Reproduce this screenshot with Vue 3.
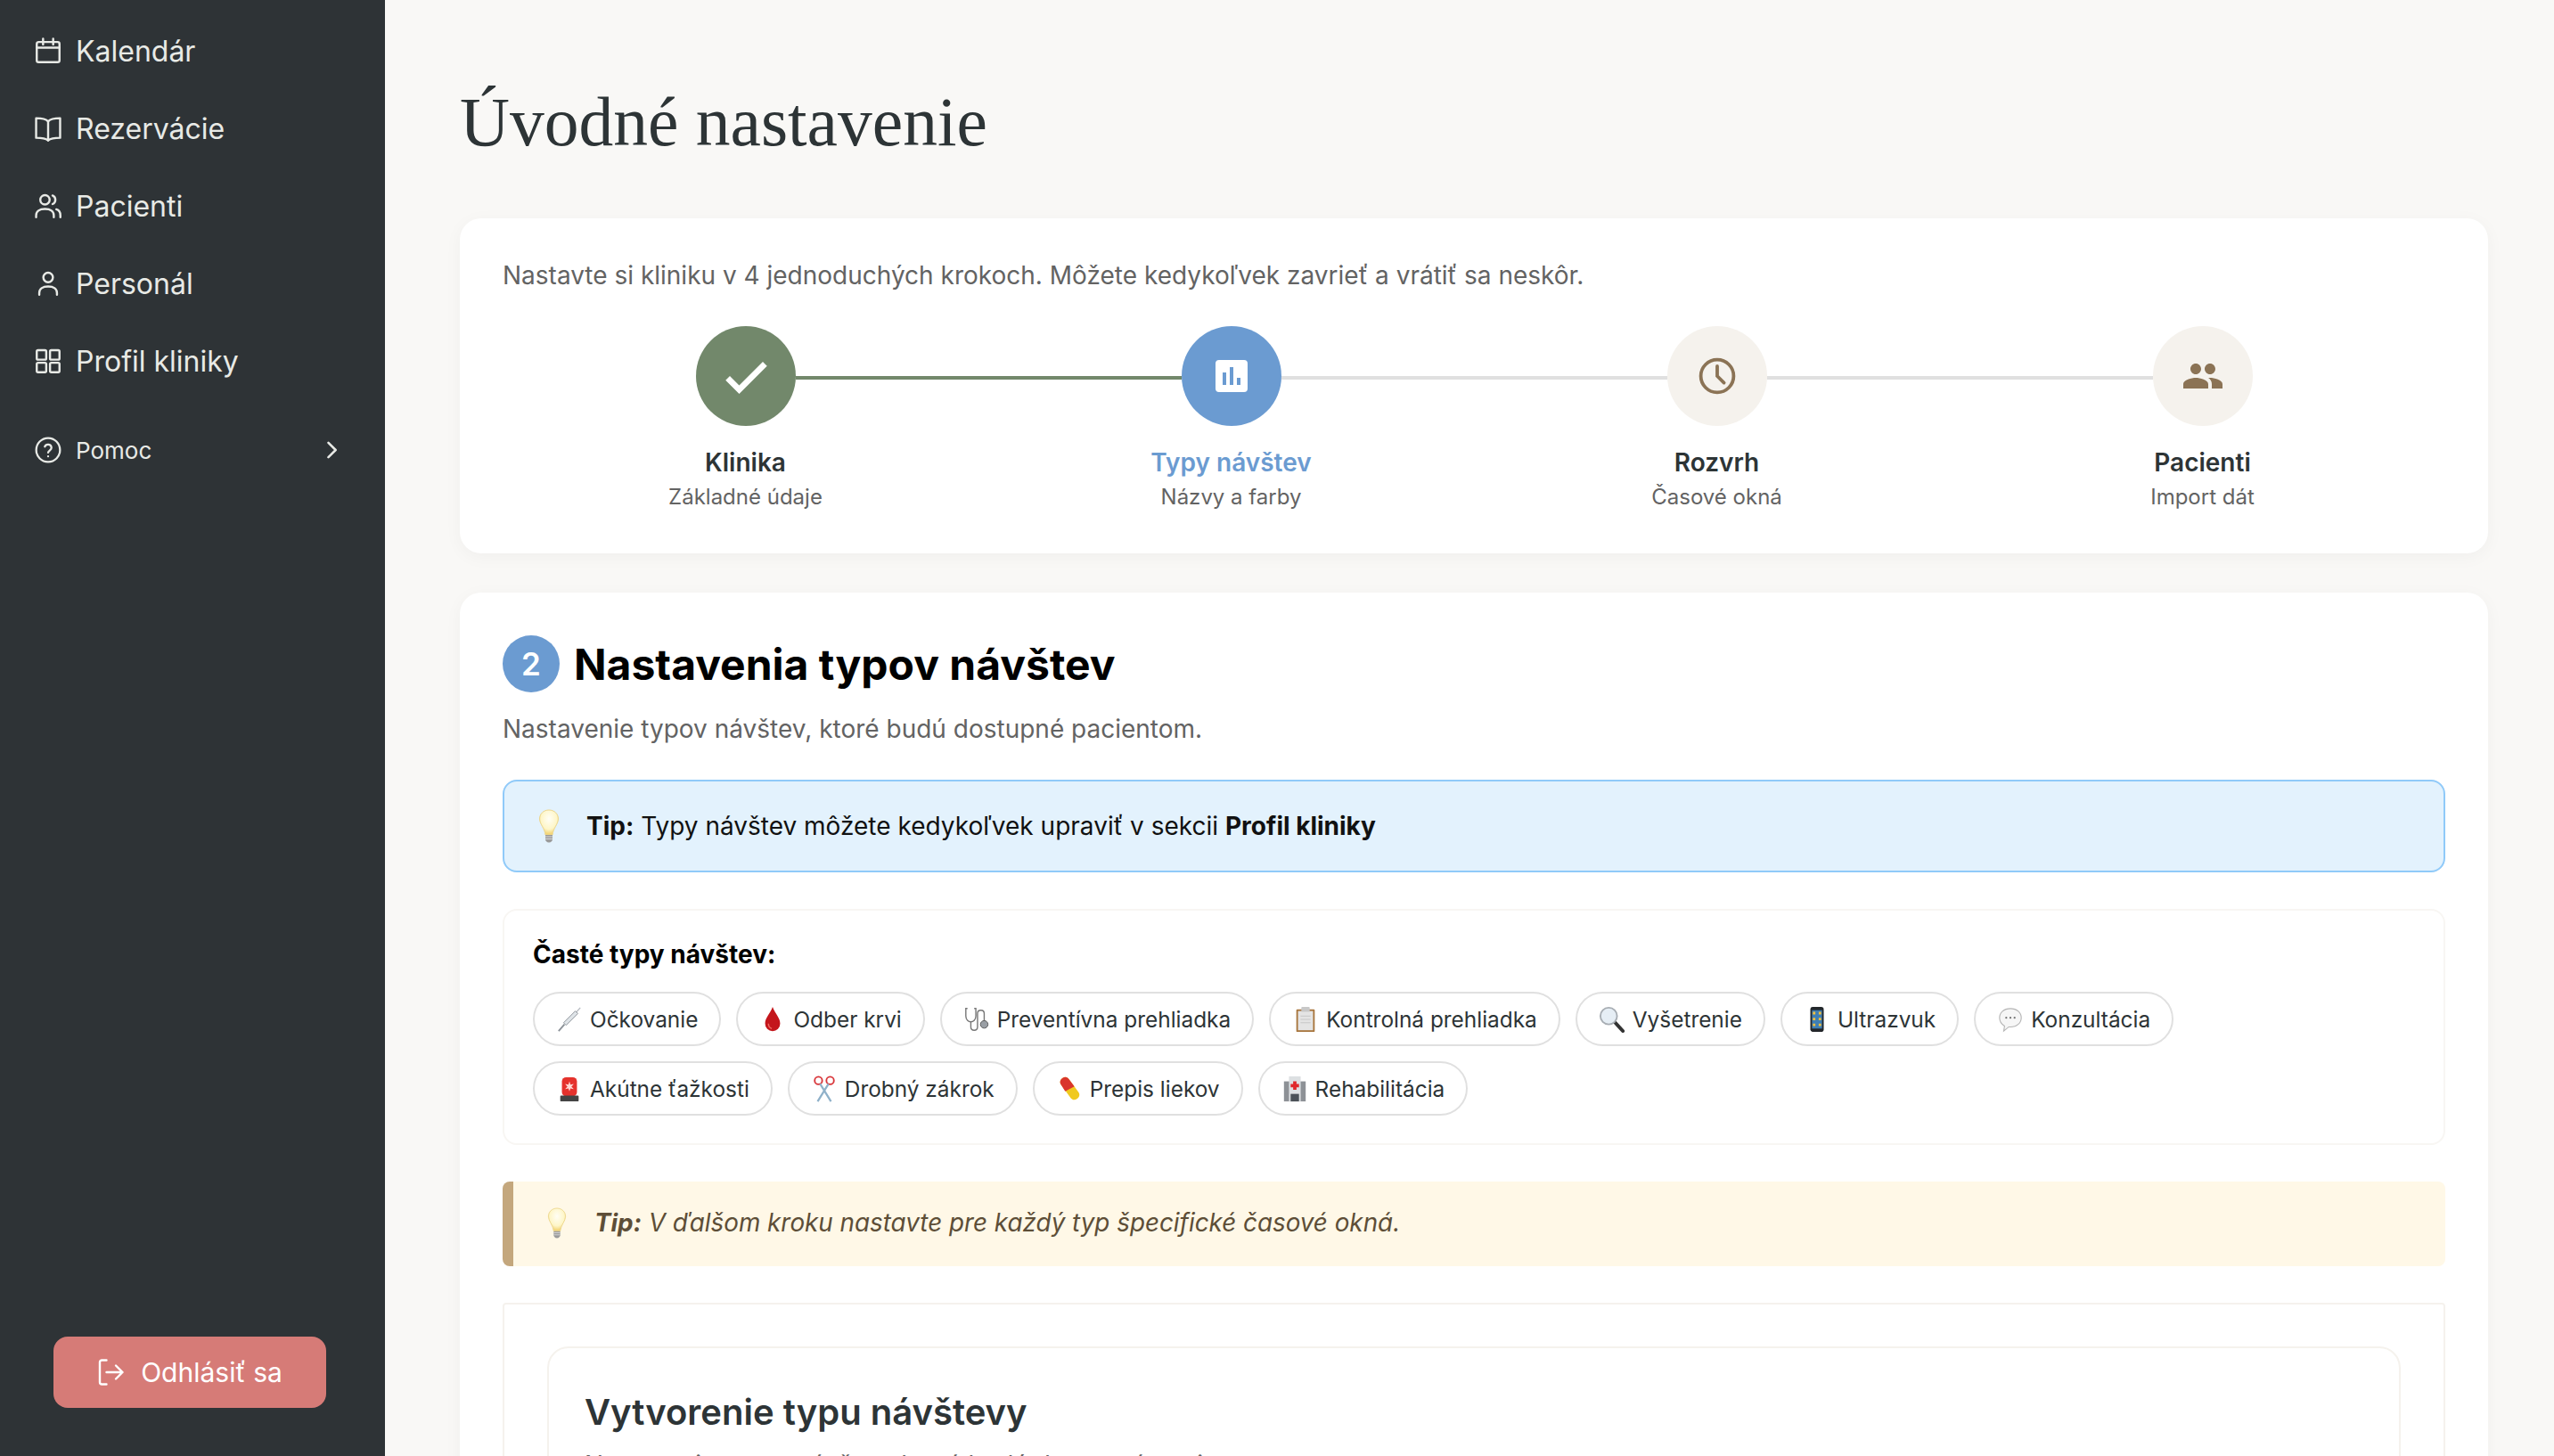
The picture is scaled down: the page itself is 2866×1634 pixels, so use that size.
<template>
  <div class="app">
    <aside class="sidebar">
      <nav class="nav">
        <a v-for="item in navItems" :key="item.label" class="nav-item">
          <svg class="nav-icon" viewBox="0 0 24 24" fill="none" stroke="currentColor" stroke-width="1.7" stroke-linecap="round" stroke-linejoin="round">
            <path v-for="d in item.paths" :key="d" :d="d" />
          </svg>
          <span>{{ item.label }}</span>
        </a>
      </nav>
      <div class="help">
        <svg class="help-icon" viewBox="0 0 24 24" fill="none" stroke="currentColor" stroke-width="1.7" stroke-linecap="round" stroke-linejoin="round">
          <circle cx="12" cy="12" r="10" />
          <path d="M9.2 9.2a2.9 2.9 0 0 1 5.6 1c0 1.9-2.8 2.4-2.8 4" />
          <path d="M12 17.4h.01" />
        </svg>
        <span class="help-label">Pomoc</span>
        <svg class="chevron" viewBox="0 0 24 24" fill="none" stroke="currentColor" stroke-width="2.2" stroke-linecap="round" stroke-linejoin="round">
          <path d="M9 5l7 7-7 7" />
        </svg>
      </div>
      <button class="logout">
        <svg class="logout-icon" viewBox="0 0 24 24" fill="none" stroke="currentColor" stroke-width="1.6" stroke-linecap="round" stroke-linejoin="round">
          <path d="M9 3H5.500a1.500 1.500 0 0 0-1.500 1.500v15A1.500 1.500 0 0 0 5.500 21H9" />
          <path d="M9 12h12M16 7l5 5-5 5" />
        </svg>
        <span>Odhlásiť sa</span>
      </button>
    </aside>

    <main class="main">
      <h1 class="title">Úvodné nastavenie</h1>

      <section class="card intro">
        <p class="lead">Nastavte si kliniku v 4 jednoduchých krokoch. Môžete kedykoľvek zavrieť a vrátiť sa neskôr.</p>
        <div class="steps">
          <div v-for="step in steps" :key="step.name" class="step" :class="step.state">
            <div class="step-dot">
              <svg v-if="step.name === 'Klinika'" class="step-icon-lg" viewBox="0 0 24 24" fill="#fff"><path d="M9 16.2 4.800 12l-1.900 1.900L9 20 21.500 7.500 19.600 5.600z" /></svg>
              <svg v-else-if="step.name === 'Typy návštev'" class="step-icon" viewBox="0 0 24 24"><path fill="#fff" d="M19 3H5a2 2 0 0 0-2 2v14a2 2 0 0 0 2 2h14a2 2 0 0 0 2-2V5a2 2 0 0 0-2-2zM9 17H7v-7h2zm4 0h-2V7h2zm4 0h-2v-4h2z" /></svg>
              <svg v-else-if="step.name === 'Rozvrh'" class="step-icon" viewBox="0 0 24 24" fill="none" stroke="#8b7355" stroke-width="1.9" stroke-linecap="round"><circle cx="12" cy="12" r="9.200" /><path d="M12 6.500V12l3.800 3.800" /></svg>
              <svg v-else class="step-icon" viewBox="0 0 24 24" fill="#8b7355"><path d="M16 11c1.660 0 2.990-1.340 2.990-3S17.660 5 16 5c-1.660 0-3 1.340-3 3s1.340 3 3 3zm-8 0c1.660 0 2.990-1.340 2.990-3S9.660 5 8 5C6.340 5 5 6.340 5 8s1.340 3 3 3zm0 2c-2.330 0-7 1.170-7 3.500V19h14v-2.500c0-2.330-4.670-3.500-7-3.500zm8 0c-.29 0-.62.02-.97.05 1.160.84 1.970 1.970 1.970 3.450V19h6v-2.500c0-2.330-4.670-3.500-7-3.500z" /></svg>
            </div>
            <div class="step-name">{{ step.name }}</div>
            <div class="step-sub">{{ step.sub }}</div>
          </div>
        </div>
      </section>

      <section class="card types">
        <div class="heading">
          <span class="badge">2</span>
          <h2>Nastavenia typov návštev</h2>
        </div>
        <p class="lead desc">Nastavenie typov návštev, ktoré budú dostupné pacientom.</p>

        <div class="tip-blue">
          <svg class="bulb" viewBox="0 0 24 38"><use href="#bulb-shape" /></svg>
          <span><b>Tip:</b> Typy návštev môžete kedykoľvek upraviť v sekcii <b>Profil kliniky</b></span>
        </div>

        <div class="common">
          <div class="common-title">Časté typy návštev:</div>
          <div class="chips">
            <button v-for="chip in chips" :key="chip.label" class="chip">
              <svg class="chip-icon" viewBox="0 0 32 32" v-html="chip.icon"></svg>
              <span>{{ chip.label }}</span>
            </button>
          </div>
        </div>

        <div class="tip-yellow">
          <svg class="bulb small" viewBox="0 0 24 38"><use href="#bulb-shape" /></svg>
          <span><b>Tip:</b> V ďalšom kroku nastavte pre každý typ špecifické časové okná.</span>
        </div>

        <div class="outer">
          <div class="inner">
            <h3>Vytvorenie typu návštevy</h3>
            <p class="lead inner-sub">Nastavenie typov návštev, ktoré budú dostupné pacientom.</p>
          </div>
        </div>
      </section>

      <svg width="0" height="0" class="defs">
        <defs>
          <radialGradient id="bulb-glow" cx="50%" cy="35%" r="60%">
            <stop offset="0" stop-color="#fffef5" />
            <stop offset="0.7" stop-color="#fef6c8" />
            <stop offset="1" stop-color="#f3d67a" />
          </radialGradient>
          <g id="bulb-shape">
            <path d="M12 1C5.800 1 1.500 5.600 1.500 11c0 5.600 5.800 10.600 6.500 18h8c.7-7.400 6.500-12.400 6.500-18C22.500 5.600 18.200 1 12 1z" fill="url(#bulb-glow)" stroke="#ecd68d" stroke-width="1" />
            <path d="M8 29h8v5c0 1.500-1.500 3.500-4 3.500S8 35.500 8 34z" fill="#9a9a9a" />
            <path d="M8 31h8M8 33.500h8" stroke="#d8d8d8" stroke-width="1" />
          </g>
        </defs>
      </svg>
    </main>
  </div>
</template>

<script setup>
const navItems = [
  { label: 'Kalendár', paths: ['M4.500 5h15a1.500 1.500 0 0 1 1.500 1.500v13a1.500 1.500 0 0 1-1.500 1.500h-15A1.500 1.500 0 0 1 3 19.500v-13A1.500 1.500 0 0 1 4.500 5z', 'M8 2.500V7M16 2.500V7M3 9.500h18'] },
  { label: 'Rezervácie', paths: ['M12 6.500C10.500 4.800 8 4 2.500 4v15.500c5.500 0 8 .8 9.500 2 1.500-1.200 4-2 9.500-2V4C16 4 13.500 4.800 12 6.500z', 'M12 6.500v15'] },
  { label: 'Pacienti', paths: ['M9.500 3.500a3.700 3.700 0 1 1 0 7.400 3.700 3.700 0 0 1 0-7.400z', 'M2.500 21v-1.500c0-3 2.500-5 7-5s7 2 7 5V21', 'M15.500 3.800a3.700 3.700 0 0 1 0 6.800', 'M18.500 14.800c2 .6 3.200 2.300 3.200 4.700V21'] },
  { label: 'Personál', paths: ['M12 3.500a3.800 3.800 0 1 1 0 7.600 3.800 3.800 0 0 1 0-7.600z', 'M5 21v-1.500c0-3 2.500-5 7-5s7 2 7 5V21'] },
  { label: 'Profil kliniky', paths: ['M4 3.500h5.500a1 1 0 0 1 1 1V10a1 1 0 0 1-1 1H4a1 1 0 0 1-1-1V4.500a1 1 0 0 1 1-1z', 'M14.500 3.500H20a1 1 0 0 1 1 1V10a1 1 0 0 1-1 1h-5.500a1 1 0 0 1-1-1V4.500a1 1 0 0 1 1-1z', 'M4 13.500h5.500a1 1 0 0 1 1 1V20a1 1 0 0 1-1 1H4a1 1 0 0 1-1-1v-5.500a1 1 0 0 1 1-1z', 'M14.500 13.500H20a1 1 0 0 1 1 1V20a1 1 0 0 1-1 1h-5.500a1 1 0 0 1-1-1v-5.500a1 1 0 0 1 1-1z'] }
]

const steps = [
  { name: 'Klinika', sub: 'Základné údaje', state: 'done' },
  { name: 'Typy návštev', sub: 'Názvy a farby', state: 'active' },
  { name: 'Rozvrh', sub: 'Časové okná', state: 'todo' },
  { name: 'Pacienti', sub: 'Import dát', state: 'todo last' }
]

// male ikonky namiesto emoji, font s farebnymi emoji tu nie je
const chips = [
  { label: 'Očkovanie', icon: '<path d="M29 2 21 11" stroke="#b8bcc2" stroke-width="1.500"/><path d="M23 6 9 20l3 3 14-14z" fill="#dfe4e8" stroke="#8b9198" stroke-width="1"/><path d="M10 22 3 30" stroke="#8b9198" stroke-width="2"/>' },
  { label: 'Odber krvi', icon: '<path d="M16 1C13 9 7 14 7 21a9 9 0 0 0 18 0c0-7-6-12-9-20z" fill="#c4161c"/><path d="M11 21c0 3 1 5 4 6" stroke="#ef6a62" stroke-width="1.500" fill="none"/>' },
  { label: 'Preventívna prehliadka', icon: '<path d="M5 3H3v9c0 4 3 7 6 7s6-3 6-7V3h-2" fill="none" stroke="#777" stroke-width="1.500"/><path d="M9 19v6c0 3 2 4 4 4s4-1 4-4V9c0-3 2-4 4-4s4 1 4 4v9" fill="none" stroke="#777" stroke-width="1.500"/><circle cx="25" cy="22" r="4.500" fill="#9a9fa5" stroke="#555"/>' },
  { label: 'Kontrolná prehliadka', icon: '<rect x="5" y="4" width="22" height="27" rx="1" fill="#a8763e"/><rect x="7" y="6" width="18" height="23" fill="#e4e4e4"/><path d="M10 12h12M10 16h12M10 20h12" stroke="#c4c4c4" stroke-width="1"/><rect x="11" y="1" width="10" height="6" rx="1" fill="#c8c8c8"/>' },
  { label: 'Vyšetrenie', icon: '<path d="M18 18 29 30" stroke="#333" stroke-width="4" stroke-linecap="round"/><circle cx="12" cy="12" r="10" fill="#e6eef5" stroke="#a7adb3" stroke-width="2"/>' },
  { label: 'Ultrazvuk', icon: '<rect x="8" y="1" width="16" height="30" rx="3" fill="#23272b"/><rect x="10" y="5" width="12" height="22" fill="#3f7fb5"/><path d="M11 7h3v3h-3zM18 7h3v3h-3zM11 14h3v3h-3zM18 14h3v3h-3zM11 21h3v3h-3zM18 21h3v3h-3z" fill="#f0c040"/>' },
  { label: 'Konzultácia', icon: '<path d="M16 3C8 3 3 8 3 14c0 5 3 8 6 10l-1 6 6-5h2c8 0 13-5 13-11S24 3 16 3z" fill="#f6f6f6" stroke="#b5b5b5" stroke-width="1.200"/><circle cx="11" cy="14" r="1.200" fill="#777"/><circle cx="16" cy="14" r="1.200" fill="#777"/><circle cx="21" cy="14" r="1.200" fill="#777"/>' },
  { label: 'Akútne ťažkosti', icon: '<rect x="7" y="2" width="18" height="23" rx="5" fill="#e5322d"/><path d="M16 7l1.200 4 4-.8-2.800 3 2.800 3-4-.8L16 19l-1.200-3.600-4 .8 2.800-3-2.800-3 4 .8z" fill="#ffd9d5"/><rect x="5" y="24" width="22" height="7" rx="1" fill="#444"/>' },
  { label: 'Drobný zákrok', icon: '<circle cx="9" cy="6" r="4.500" fill="none" stroke="#d9363a" stroke-width="2"/><circle cx="23" cy="6" r="4.500" fill="none" stroke="#d9363a" stroke-width="2"/><path d="M11 10 24 31M21 10 8 31" stroke="#8fb1c9" stroke-width="2.400"/>' },
  { label: 'Prepis liekov', icon: '<path d="M8 3c3-2 6-1 8 2l11 15c2 3 1 6-2 8s-6 1-8-2L6 11C4 8 5 5 8 3z" fill="#f0c91f"/><path d="M8 3c3-2 6-1 8 2l6 8-11 6-5-8C4 8 5 5 8 3z" fill="#d9352c"/>' },
  { label: 'Rehabilitácia', icon: '<rect x="3" y="7" width="26" height="24" fill="#8d9196"/><rect x="9" y="1" width="14" height="30" fill="#dde0e2"/><path d="M14 7h4v3h3v4h-3v3h-4v-3h-3v-4h3z" fill="#e0282b"/><rect x="11" y="22" width="10" height="9" fill="#4b5158"/>' }
]
</script>

<style scoped>
.app {
  display: flex;
  height: 1634px;
  overflow: hidden;
  background: #f9f8f6;
  font-family: Inter, "Noto Sans", sans-serif;
  color: #2d3436;
}

.sidebar {
  width: 432px;
  flex-shrink: 0;
  background: #2e3336;
  display: flex;
  flex-direction: column;
  padding: 17px 0 54px;
  box-sizing: border-box;
  color: #e8eae6;
}

.nav {
  display: flex;
  flex-direction: column;
  gap: 7px;
}

.nav-item {
  display: flex;
  align-items: center;
  gap: 14px;
  height: 80px;
  padding-left: 37px;
  font-size: 32px;
}

.nav-icon {
  width: 34px;
  height: 34px;
  flex-shrink: 0;
}

.help {
  display: flex;
  align-items: center;
  gap: 15px;
  height: 64px;
  margin-top: 28px;
  padding: 0 46px 0 38px;
  font-size: 26px;
}

.help-icon {
  width: 32px;
  height: 32px;
  flex-shrink: 0;
}

.help-label {
  flex: 1;
}

.chevron {
  width: 28px;
  height: 28px;
}

.logout {
  margin: auto 66px 0 60px;
  height: 80px;
  display: flex;
  align-items: center;
  justify-content: center;
  gap: 16px;
  padding: 0 3px 0 0;
  border: 0;
  border-radius: 16px;
  background: #d67b77;
  color: #fff;
  font: inherit;
  font-size: 30px;
}

.logout-icon {
  width: 36px;
  height: 36px;
}

.main {
  flex: 1;
  min-width: 0;
  padding: 0 74px 0 84px;
}

.title {
  margin: 0;
  padding: 93px 0 63px;
  font-family: "Liberation Serif", serif;
  font-weight: 400;
  font-size: 77.5px;
  line-height: 89px;
  color: #2d3436;
}

.card {
  background: #fff;
  border-radius: 24px;
  box-shadow: 0 4px 20px rgba(0, 0, 0, 0.04);
  padding: 48px;
}

.intro {
  height: 376px;
  box-sizing: border-box;
  padding-top: 46px;
  margin-bottom: 44px;
}

.lead {
  margin: 0;
  font-size: 28px;
  line-height: 36px;
  color: #636363;
}

.steps {
  display: flex;
  margin-top: 39px;
}

.step {
  flex: 1;
  position: relative;
  display: flex;
  flex-direction: column;
  align-items: center;
}

/* spojovacia ciara medzi krokmi */
.step::after {
  content: "";
  position: absolute;
  top: 56px;
  left: calc(50% + 56px);
  width: calc(100% - 112px);
  height: 4px;
  background: #e0e0e0;
}

.step.done::after {
  background: #72886b;
}

.step.last::after {
  display: none;
}

.step-dot {
  width: 112px;
  height: 112px;
  border-radius: 50%;
  display: flex;
  align-items: center;
  justify-content: center;
  background: #f5f2ed;
}

.done .step-dot {
  background: #72886b;
}

.active .step-dot {
  background: #6b9bd1;
}

.step-icon {
  width: 48px;
  height: 48px;
}

.step-icon-lg {
  width: 60px;
  height: 60px;
}

.step-name {
  margin-top: 23px;
  font-size: 28px;
  line-height: 36px;
  font-weight: 600;
  color: #2d3436;
}

.active .step-name {
  color: #6b9bd1;
}

.step-sub {
  margin-top: 5px;
  font-size: 24px;
  line-height: 32px;
  color: #636363;
}

.types {
  min-height: 1200px;
}

.heading {
  display: flex;
  align-items: center;
  gap: 16px;
}

.heading h2 {
  margin: 0;
  height: 64px;
  font-size: 48px;
  line-height: 66px;
  font-weight: 700;
  color: #000;
}

.badge {
  width: 64px;
  height: 64px;
  border-radius: 50%;
  background: #6b9bd1;
  color: #fff;
  font-size: 35px;
  font-weight: 600;
  display: flex;
  align-items: center;
  justify-content: center;
}

.desc {
  margin-top: 23px;
}

.tip-blue {
  margin-top: 39px;
  height: 104px;
  box-sizing: border-box;
  display: flex;
  align-items: center;
  gap: 30px;
  padding-left: 38px;
  background: #e3f2fd;
  border: 2px solid #90caf9;
  border-radius: 16px;
  font-size: 28px;
  color: #111;
}

.tip-blue b,
.tip-yellow b {
  font-weight: 700;
}

.bulb {
  width: 24px;
  height: 38px;
  flex-shrink: 0;
}

.bulb.small {
  width: 22px;
  height: 35px;
}

.common {
  margin-top: 41px;
  height: 265px;
  box-sizing: border-box;
  border: 2px solid #f8f6f3;
  border-radius: 16px;
  padding: 30px 32px;
}

.common-title {
  font-size: 28px;
  line-height: 38px;
  font-weight: 700;
  color: #000;
}

.chips {
  display: flex;
  flex-wrap: wrap;
  gap: 17px;
  margin-top: 23px;
}

.chip {
  height: 61px;
  box-sizing: border-box;
  display: flex;
  align-items: center;
  gap: 8px;
  padding: 0 24px;
  background: #fff;
  border: 2px solid #e0e0e0;
  border-radius: 40px;
  font: inherit;
  font-size: 24.4px;
  color: #2d3436;
}

.chip-icon {
  width: 30px;
  height: 30px;
  flex-shrink: 0;
}

.tip-yellow {
  margin-top: 41px;
  height: 95px;
  box-sizing: border-box;
  display: flex;
  align-items: center;
  gap: 31px;
  padding: 0 0 3px 38px;
  background: #fff8e7;
  border-left: 12px solid #c4a77d;
  border-radius: 8px;
  font-size: 27.8px;
  font-style: italic;
  color: #5d4e37;
}

.outer {
  margin-top: 41px;
  border: 2px solid #f5f2ed;
  border-radius: 4px;
  padding: 47px 48px;
}

.inner {
  border: 2px solid #f5f2ed;
  border-radius: 24px;
  padding: 45px 40px;
}

.inner h3 {
  margin: 0;
  font-size: 40px;
  line-height: 54px;
  font-weight: 600;
  color: #2d3436;
}

.inner-sub {
  margin-top: 14px;
}

.defs {
  position: absolute;
}
</style>

<style>
html, body {
  margin: 0;
  overflow: hidden;
}
</style>
